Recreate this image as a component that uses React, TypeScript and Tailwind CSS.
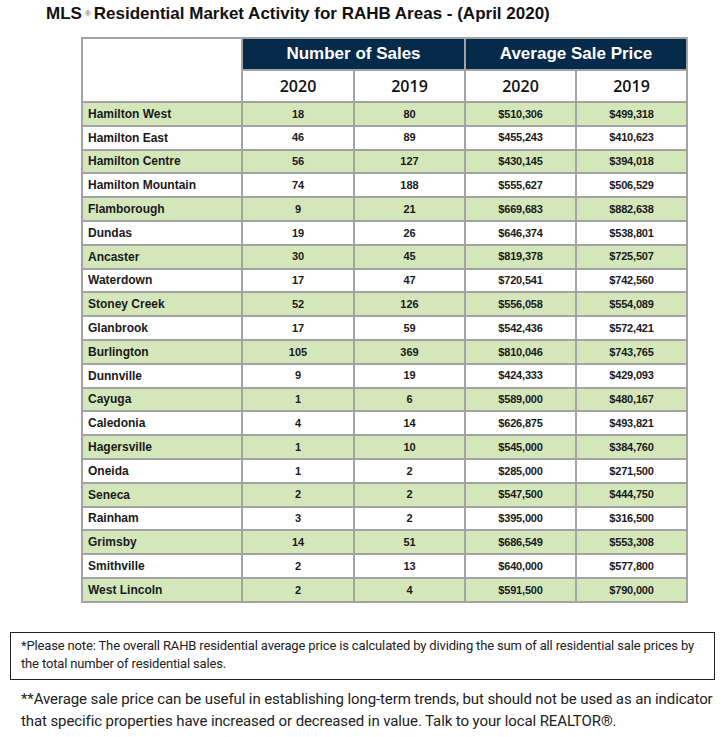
import React from "react";

interface AreaRow {
  area: string;
  sales2020: string;
  sales2019: string;
  price2020: string;
  price2019: string;
}

const rows: AreaRow[] = [
  { area: "Hamilton West", sales2020: "18", sales2019: "80", price2020: "$510,306", price2019: "$499,318" },
  { area: "Hamilton East", sales2020: "46", sales2019: "89", price2020: "$455,243", price2019: "$410,623" },
  { area: "Hamilton Centre", sales2020: "56", sales2019: "127", price2020: "$430,145", price2019: "$394,018" },
  { area: "Hamilton Mountain", sales2020: "74", sales2019: "188", price2020: "$555,627", price2019: "$506,529" },
  { area: "Flamborough", sales2020: "9", sales2019: "21", price2020: "$669,683", price2019: "$882,638" },
  { area: "Dundas", sales2020: "19", sales2019: "26", price2020: "$646,374", price2019: "$538,801" },
  { area: "Ancaster", sales2020: "30", sales2019: "45", price2020: "$819,378", price2019: "$725,507" },
  { area: "Waterdown", sales2020: "17", sales2019: "47", price2020: "$720,541", price2019: "$742,560" },
  { area: "Stoney Creek", sales2020: "52", sales2019: "126", price2020: "$556,058", price2019: "$554,089" },
  { area: "Glanbrook", sales2020: "17", sales2019: "59", price2020: "$542,436", price2019: "$572,421" },
  { area: "Burlington", sales2020: "105", sales2019: "369", price2020: "$810,046", price2019: "$743,765" },
  { area: "Dunnville", sales2020: "9", sales2019: "19", price2020: "$424,333", price2019: "$429,093" },
  { area: "Cayuga", sales2020: "1", sales2019: "6", price2020: "$589,000", price2019: "$480,167" },
  { area: "Caledonia", sales2020: "4", sales2019: "14", price2020: "$626,875", price2019: "$493,821" },
  { area: "Hagersville", sales2020: "1", sales2019: "10", price2020: "$545,000", price2019: "$384,760" },
  { area: "Oneida", sales2020: "1", sales2019: "2", price2020: "$285,000", price2019: "$271,500" },
  { area: "Seneca", sales2020: "2", sales2019: "2", price2020: "$547,500", price2019: "$444,750" },
  { area: "Rainham", sales2020: "3", sales2019: "2", price2020: "$395,000", price2019: "$316,500" },
  { area: "Grimsby", sales2020: "14", sales2019: "51", price2020: "$686,549", price2019: "$553,308" },
  { area: "Smithville", sales2020: "2", sales2019: "13", price2020: "$640,000", price2019: "$577,800" },
  { area: "West Lincoln", sales2020: "2", sales2019: "4", price2020: "$591,500", price2019: "$790,000" },
];

export default function App() {
  return (
    <div className="min-h-screen bg-white pt-[3px] text-[#1a1a1a] [font-family:'Liberation_Sans',Arial,sans-serif]">
      <h1 className="ml-[46px] h-[22px] text-[17px] font-bold leading-[22px] text-[#111]">
        MLS<span className="relative -top-[3px] mx-[3px] text-[8px] text-[#777]">®</span>Residential Market Activity for
        RAHB Areas - (April 2020)
      </h1>

      <div className="ml-[81px] mt-[12px] grid w-fit grid-cols-[158px_110px_109px_109px_109px] grid-rows-[30px_30px] auto-rows-[21.8px] gap-[2px] bg-[#a3a3a3] p-[2px]">
        <div className="row-span-2 bg-white" />
        <div className="col-span-2 flex items-center justify-center bg-[#062b4a] text-[17px] font-bold text-white">
          Number of Sales
        </div>
        <div className="col-span-2 flex items-center justify-center bg-[#062b4a] text-[17px] font-bold text-white">
          Average Sale Price
        </div>
        {["2020", "2019", "2020", "2019"].map((y, i) => (
          <div
            key={i}
            className="flex items-center justify-center bg-white text-[16px] font-semibold text-[#111] [font-family:'Open_Sans',sans-serif]"
          >
            {y}
          </div>
        ))}
        {rows.map((row, i) => {
          const bg = i % 2 === 0 ? "bg-[#d4e7bb]" : "bg-white";
          return (
            <React.Fragment key={row.area}>
              <div className={`${bg} flex items-center pl-[5px] text-[12px] font-bold`}>{row.area}</div>
              <div className={`${bg} flex items-center justify-center text-[11px] font-bold`}>{row.sales2020}</div>
              <div className={`${bg} flex items-center justify-center text-[11px] font-bold`}>{row.sales2019}</div>
              <div className={`${bg} flex items-center justify-center text-[11px] font-bold tracking-[-0.2px]`}>
                {row.price2020}
              </div>
              <div className={`${bg} flex items-center justify-center text-[11px] font-bold tracking-[-0.2px]`}>
                {row.price2019}
              </div>
            </React.Fragment>
          );
        })}
      </div>

      <div className="ml-[10px] mt-[29px] w-[705px] border border-[#222] px-[10px] pb-[6px] pt-[4px] text-[13px] leading-[18px] tracking-[-0.15px] text-[#222] [font-family:Roboto,sans-serif]">
        *Please note: The overall RAHB residential average price is calculated by dividing the sum of all residential sale
        prices by the total number of residential sales.
      </div>

      <p className="ml-[21px] mt-[8px] w-[702px] text-[15px] leading-[22px] tracking-[-0.1px] text-[#222] [font-family:Roboto,sans-serif]">
        **Average sale price can be useful in establishing long-term trends, but should not be used as an indicator
        that specific properties have increased or decreased in value. Talk to your local REALTOR®.
      </p>
    </div>
  );
}
